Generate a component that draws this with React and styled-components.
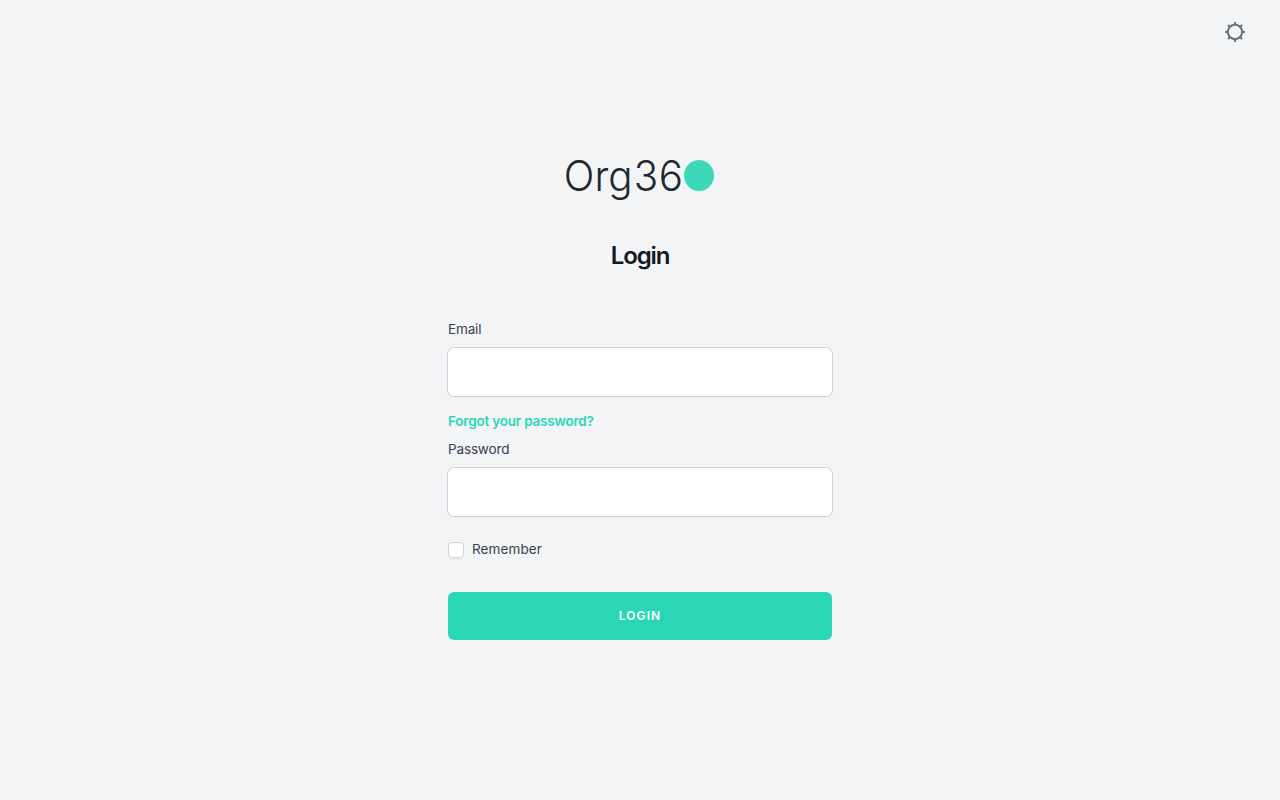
import { useState } from "react";
import styled, { createGlobalStyle, css } from "styled-components";

const GlobalStyles = createGlobalStyle`
  *, *::before, *::after {
    box-sizing: border-box;
  }

  body {
    margin: 0;
    background-color: #f3f4f6;
    color: #111827;
    font-family: Inter, "Liberation Sans", sans-serif;
  }
`;

const Page = styled.div`
  display: flex;
  flex-direction: column;
  align-items: center;
  height: 100vh;
`;

const TopBar = styled.header`
  display: flex;
  justify-content: flex-end;
  width: 100%;
  height: 64px;
  padding: 20px 33px;
`;

const IconButton = styled.button`
  display: flex;
  width: 24px;
  height: 24px;
  padding: 0;
  border: none;
  background: none;
  color: #6b7280;
  cursor: pointer;
`;

const Main = styled.main`
  display: flex;
  flex-direction: column;
  align-items: center;
  width: 384px;
  padding-top: 80px;
`;

const LogoSvg = styled.svg`
  display: block;
  width: 160px;
  height: 64px;
`;

const Title = styled.h1`
  margin: 32px 0 0;
  font-size: 24px;
  line-height: 32px;
  font-weight: 600;
  letter-spacing: -1.1px;
`;

const Form = styled.form`
  display: flex;
  flex-direction: column;
  width: 100%;
  margin-top: 48px;
`;

const labelText = css`
  color: #374151;
  font-size: 13.5px;
  line-height: 20px;
  font-weight: 400;
  letter-spacing: ${(props) => props.$spacing || "0"};
`;

const Label = styled.label`
  margin-top: -1px;
  ${labelText};
`;

const Input = styled.input`
  width: 100%;
  height: 48px;
  margin-top: 9px;
  padding: 0 12px;
  border: none;
  border-radius: 6px;
  background-color: #fff;
  box-shadow: 0 0 0 1px #d1d5db, 0 1px 2px 0 rgba(0, 0, 0, 0.05);
  font: inherit;
  outline: none;
`;

const ForgotLink = styled.a`
  align-self: flex-start;
  margin: 15px 0 9px;
  color: #2ad7b5;
  font-size: 13.5px;
  line-height: 20px;
  font-weight: 600;
  letter-spacing: -0.2px;
  text-decoration: none;
`;

const RememberRow = styled.label`
  display: flex;
  align-items: center;
  gap: 8px;
  margin: 23px 0 33px;
  ${labelText};
`;

const Checkbox = styled.input`
  appearance: none;
  width: 16px;
  height: 16px;
  margin: 2px 0 0;
  border: 1px solid #d1d5db;
  border-radius: 4px;
  background-color: ${(props) => (props.checked ? "#2ad7b5" : "#fff")};
  box-shadow: 0 1px 2px 0 rgba(0, 0, 0, 0.05);
`;

const Button = styled.button`
  height: 48px;
  border: none;
  border-radius: 6px;
  background-color: #2ad7b5;
  color: #fff;
  font-family: inherit;
  font-size: 12px;
  line-height: 16px;
  font-weight: 600;
  letter-spacing: 1.1px;
  text-transform: uppercase;
  cursor: pointer;
`;

const rays = [0, 45, 90, 135, 180, 225, 270, 315];

function SunIcon() {
  return (
    <svg width="24" height="24" viewBox="0 0 24 24" fill="none" stroke="currentColor" strokeWidth="2.1">
      <circle cx="12" cy="12" r="7.2" />
      {rays.map((angle) => (
        <path key={angle} d="M12 5V2.1" transform={`rotate(${angle} 12 12)`} />
      ))}
    </svg>
  );
}

function Logo() {
  return (
    <LogoSvg viewBox="0 0 160 64">
      <text
        x="3.8 35.9 50.3 76.8 102.8"
        y="47"
        transform="scale(0.96 1)"
        fill="#20282e"
        fontFamily="Inter"
        fontSize="42"
        fontWeight="300"
      >
        Org36
      </text>
      <ellipse cx="139" cy="31.5" rx="15" ry="15.5" fill="#3dd8b8" />
    </LogoSvg>
  );
}

function App() {
  const [remember, setRemember] = useState(false);

  return (
    <>
      <GlobalStyles />
      <Page>
        <TopBar>
          <IconButton aria-label="Theme">
            <SunIcon />
          </IconButton>
        </TopBar>
        <Main>
          <Logo />
          <Title>Login</Title>
          <Form onSubmit={(e) => e.preventDefault()}>
            <Label htmlFor="email" $spacing="-0.15px">Email</Label>
            <Input id="email" type="email" />
            <ForgotLink href="#">Forgot your password?</ForgotLink>
            <Label htmlFor="password" $spacing="-0.15px">Password</Label>
            <Input id="password" type="password" />
            <RememberRow $spacing="0.1px">
              <Checkbox
                type="checkbox"
                checked={remember}
                onChange={(e) => setRemember(e.target.checked)}
              />
              Remember
            </RememberRow>
            <Button type="submit">Login</Button>
          </Form>
        </Main>
      </Page>
    </>
  );
}

export default App;
